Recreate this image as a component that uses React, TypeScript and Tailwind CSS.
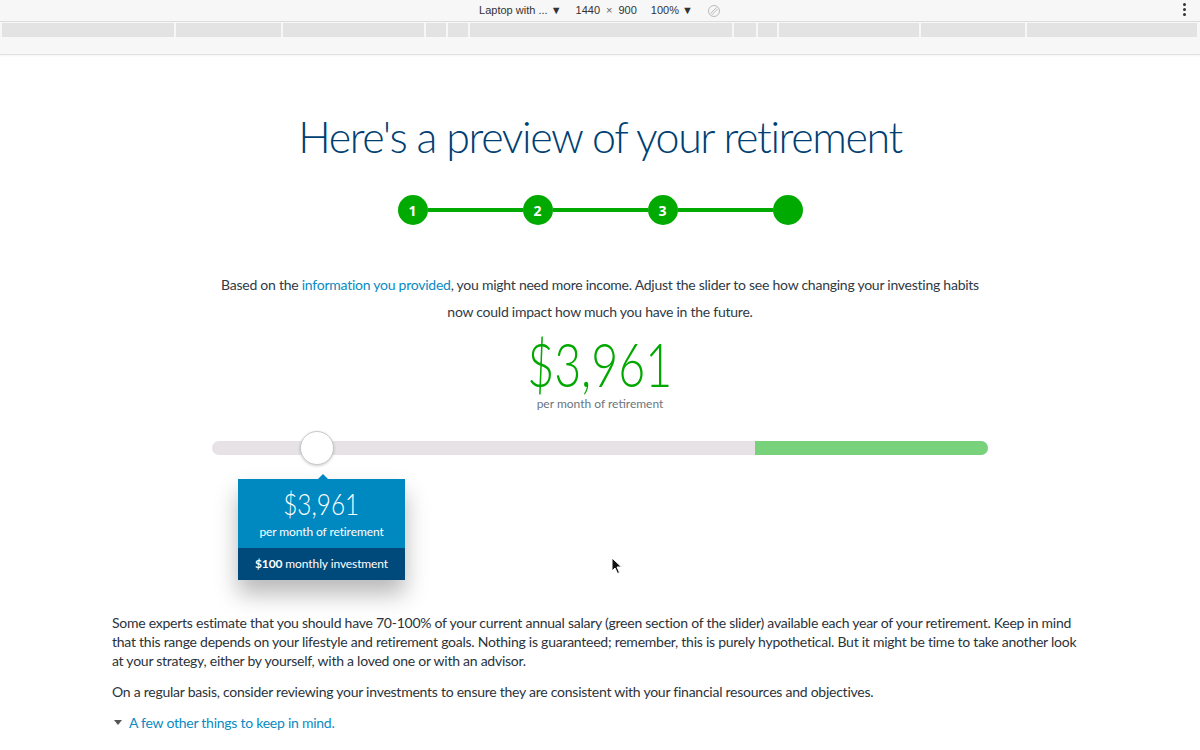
import React from "react";

const segments = [172, 105, 141, 20, 20, 262, 22, 19, 140, 104, 170];

const DevToolbar = () => {
  return (
    <div className="bg-[#f7f7f7] font-['Liberation_Sans',Arial,sans-serif]">
      <div className="relative flex h-[22px] items-center justify-center gap-[14px] border-b border-[#dcdcdc] text-[11px] text-[#333]">
        <span>Laptop with ... &#9660;</span>
        <span className="flex items-center gap-[6px]">
          <span>1440</span>
          <span className="text-[#666]">×</span>
          <span>900</span>
        </span>
        <span>100% &#9660;</span>
        <svg width="14" height="14" viewBox="0 0 14 14" className="text-[#bbb]">
          <circle cx="7" cy="7" r="5.5" fill="none" stroke="currentColor" strokeWidth="1" />
          <path d="M3.5 9.5 L9.5 3.5 M4.8 10.8 L10.8 4.8" stroke="currentColor" strokeWidth="1" />
        </svg>
        <span className="absolute right-[14px] top-[3px] flex flex-col gap-[2px]">
          <span className="h-[3px] w-[3px] rounded-full bg-[#333]" />
          <span className="h-[3px] w-[3px] rounded-full bg-[#333]" />
          <span className="h-[3px] w-[3px] rounded-full bg-[#333]" />
        </span>
      </div>
      <div className="flex h-[16px] gap-[2px] px-[2px] pt-[1px]">
        {segments.map((w, i) => (
          <div key={i} className="h-[14px] bg-[#e3e3e3]" style={{ width: w }} />
        ))}
      </div>
      <div className="h-[17px] border-b border-[#e2e2e2] shadow-[0_1px_2px_rgba(0,0,0,0.05)]" />
    </div>
  );
};

const Stepper = () => {
  const steps = ["1", "2", "3", ""];
  return (
    <div className="mx-auto flex w-[405px] items-center">
      {steps.map((s, i) => (
        <React.Fragment key={i}>
          {i > 0 && <div className="h-[4px] flex-1 bg-[#00aa00]" />}
          <div className="flex h-[30px] w-[30px] items-center justify-center rounded-full bg-[#00aa00] font-['Open_Sans',sans-serif] text-[14px] font-bold text-white">
            {s}
          </div>
        </React.Fragment>
      ))}
    </div>
  );
};

const Slider = () => {
  return (
    <div className="relative mx-auto mt-[29px] h-[14px] w-[776px] rounded-full bg-[#e7e2e5]">
      <div className="absolute right-0 top-0 h-[14px] w-[233px] rounded-r-full bg-[#78d17b]" />
      <div className="absolute left-[88px] top-[-10px] h-[34px] w-[34px] rounded-full border border-[#c9c9c9] bg-white shadow-[0_1px_3px_rgba(0,0,0,0.2)]" />
      <div className="absolute left-[26px] top-[38px] w-[167px] shadow-[0_14px_22px_rgba(0,0,0,0.28)]">
        <div className="absolute left-[80px] top-[-5px] h-0 w-0 border-x-[5px] border-b-[5px] border-x-transparent border-b-[#0088c1]" />
        <div className="flex h-[69px] flex-col items-center bg-[#0088c1] pt-[9px] text-white">
          <span className="inline-block scale-x-[0.84] text-[29px] font-light leading-[32px]">$3,961</span>
          <span className="mt-[5px] text-[12px] leading-[14px] tracking-[-0.1px]">per month of retirement</span>
        </div>
        <div className="flex h-[32px] items-center justify-center bg-[#00497b] text-[12px] tracking-[-0.1px] text-white">
          <span>
            <span className="font-bold">$100</span> monthly investment
          </span>
        </div>
      </div>
    </div>
  );
};

const App = () => {
  return (
    <div className="relative min-h-[750px] bg-white font-['Lato',sans-serif]">
      <DevToolbar />
      <div className="pt-[56px] text-center">
        <h1 className="text-[43px] font-light leading-[52px] tracking-[-1.4px] text-[#003f73]">
          Here's a preview of your retirement
        </h1>
        <div className="mt-[32px]">
          <Stepper />
        </div>
        <p className="mx-auto mt-[46px] w-[775px] text-[14px] leading-[27px] tracking-[-0.25px] text-[#2f3a45]">
          Based on the <a className="text-[#0a8ac2]">information you provided</a>, you might need more
          income. Adjust the slider to see how changing your investing habits now could impact how
          much you have in the future.
        </p>
        <div className="mt-[10px] flex justify-center">
          <span className="inline-block scale-x-[0.75] text-[62px] font-light leading-[56px] text-[#00a800]">
            $3,961
          </span>
        </div>
        <div className="mt-[5px] text-[12px] leading-[16px] text-[#6b7580]">per month of retirement</div>
      </div>
      <Slider />
      <div className="mx-auto mt-[158px] max-w-[976px] text-[14px] leading-[19px] tracking-[-0.25px] text-[#2b333b]">
        <p>
          Some experts estimate that you should have 70-100% of your current annual salary (green
          section of the slider) available each year of your retirement. Keep in mind that this range
          depends on your lifestyle and retirement goals. Nothing is guaranteed; remember, this is
          purely hypothetical. But it might be time to take another look at your strategy, either by
          yourself, with a loved one or with an advisor.
        </p>
        <p className="mt-[12px]">
          On a regular basis, consider reviewing your investments to ensure they are consistent with
          your financial resources and objectives.
        </p>
        <a className="mt-[12px] flex items-center gap-[7px] pl-[2px] text-[#0a8ac2]">
          <span className="h-0 w-0 border-x-[4px] border-t-[5px] border-x-transparent border-t-[#555]" />
          A few other things to keep in mind.
        </a>
      </div>
      <svg className="absolute left-[611px] top-[557px]" width="12" height="18" viewBox="0 0 12 18">
        <path d="M1 1 L1 14 L4 11 L6.5 16.5 L8.5 15.5 L6 10 L10.5 10 Z" fill="#111" stroke="#fff" strokeWidth="1" />
      </svg>
    </div>
  );
};

export default App;
